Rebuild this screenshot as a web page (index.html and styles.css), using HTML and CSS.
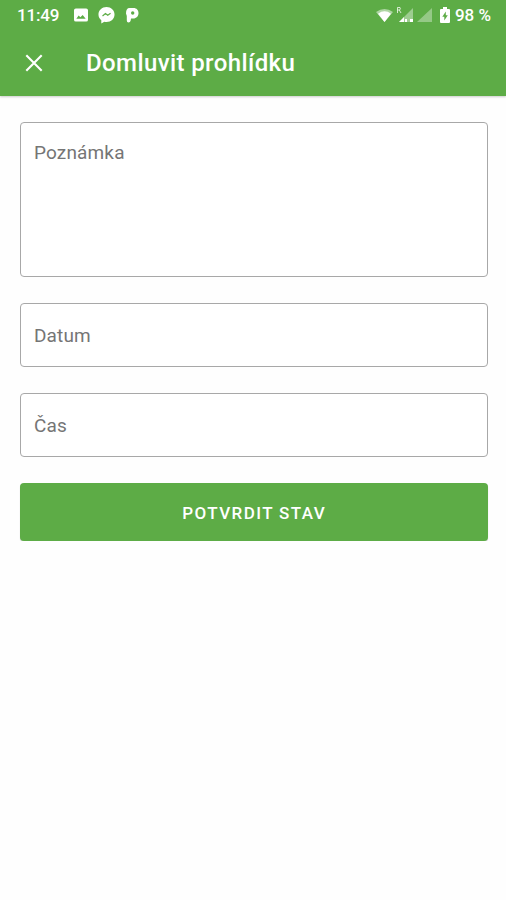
FILE: index.html
```html
<!DOCTYPE html>
<html lang="cs">
<head>
<meta charset="utf-8">
<title>Domluvit prohlídku</title>
<link rel="stylesheet" href="styles.css">
</head>
<body>
<header class="header">
  <div class="status">
    <span class="clock">11:49</span>
    <svg class="icon-image" width="14" height="14" viewBox="0 0 15 14"><path fill="#fff" fill-rule="evenodd" d="M2 0H13Q15 0 15 2V12Q15 14 13 14H2Q0 14 0 12V2Q0 0 2 0ZM2.500 11H12.500L9.300 7L6.800 9.500L5 7.600Z"/></svg>
    <svg class="icon-chat" width="17" height="17" viewBox="0 0 17 18"><path fill="#fff" d="M8.500 0C3.700 0 0 3.400 0 8C0 10.500 1.100 12.600 3 14V17.500L6.200 15.700C12 17 17 13.300 17 8C17 3.400 13.300 0 8.500 0Z"/><path d="M4.300 9.500L7.400 7L9.800 8.700L12.800 6.700" fill="none" stroke="#5dac46" stroke-width="1.300"/></svg>
    <svg class="icon-p" width="13" height="15" viewBox="0 0 13 15"><path fill="#fff" fill-rule="evenodd" d="M3.500 0H7.500C10.700 0 12.500 2.200 12.500 5C12.500 8.200 10.300 10.500 7.300 10.500H5L4.700 12.500Q4.300 14.500 2.500 14.500Q.8 14.500 .8 12.500V8L0 5.500Q0 0 3.500 0ZM6.700 3.300A1.700 1.700 0 1 0 6.700 6.700A1.700 1.700 0 1 0 6.700 3.300Z"/></svg>
    <span class="spacer"></span>
    <svg class="icon-wifi" width="17" height="13" viewBox="0 0 17 13"><path fill="#fff" fill-opacity=".5" d="M0 3Q8.500-3 17 3L8.500 13Z"/><path fill="#fff" d="M2 4.700Q8.500 0 15 4.700L8.500 13Z"/></svg>
    <svg class="icon-roaming" width="18" height="17" viewBox="0 0 18 17"><path fill="#fff" fill-opacity=".4" d="M17 2V16H3Z"/><path fill="#fff" d="M8 11V16H3ZM9 13H11V16H9ZM14 13H17V16H14Z"/><path fill="none" stroke="#fff" stroke-opacity=".75" d="M1.500 7V1.500H4Q5 3 3.500 4H1.500M3.300 4L5 7"/></svg>
    <svg class="icon-signal" width="15" height="14" viewBox="0 0 15 14"><path fill="#fff" fill-opacity=".35" d="M15 0V14H0Z"/></svg>
    <svg class="icon-battery" width="10" height="16" viewBox="0 0 10 16"><path fill="#fff" d="M3 0H7V2H9Q10 2 10 3V15Q10 16 9 16H1Q0 16 0 15V3Q0 2 1 2H3Z"/><path fill="#5dac46" d="M5.800 4.500L2.300 9.800H4.300V13.500L7.800 8.200H5.800Z"/></svg>
    <span class="percent">98 %</span>
  </div>
  <div class="toolbar">
    <svg class="close" width="18" height="18" viewBox="0 0 18 18"><path d="M1.300 1.300L16.700 16.700M16.700 1.300L1.300 16.700" stroke="#fff" stroke-width="2.100"/></svg>
    <h1 class="title">Domluvit prohlídku</h1>
  </div>
</header>
<main class="form">
  <div class="field note"><span>Poznámka</span></div>
  <div class="field"><span>Datum</span></div>
  <div class="field"><span>Čas</span></div>
  <button class="submit" type="button">POTVRDIT STAV</button>
</main>
</body>
</html>
```
FILE: styles.css
```css
* {
  box-sizing: border-box;
}

body {
  margin: 0;
  background: #fefefe;
  font-family: Roboto, sans-serif;
}

svg {
  display: block;
  flex: none;
}

.header {
  height: 96px;
  background: #5dac46;
  color: #fff;
  box-shadow: 0 1px 2px rgba(0, 0, 0, .2);
}

.status {
  display: flex;
  align-items: center;
  height: 31px;
  padding: 0 15px 0 17px;
  font-size: 17px;
  font-weight: 500;
  line-height: 31px;
  white-space: nowrap;
}

.clock {
  width: 57px;
  letter-spacing: -.2px;
}

.icon-image {
  margin: -1px 10px 0 0;
}

.icon-chat {
  margin-right: 11px;
}

.spacer {
  flex: 1;
}

.icon-wifi {
  margin-right: 3px;
}

.icon-roaming {
  margin: -3px 3px 0 0;
}

.icon-signal {
  margin: -1px 8px 0 0;
}

.icon-battery {
  margin: -1px 5px 0 0;
}

.toolbar {
  display: flex;
  align-items: center;
  height: 64px;
  padding-left: 25px;
}

.title {
  margin: 0 0 0 43px;
  font-size: 24px;
  font-weight: 500;
  line-height: 32px;
  letter-spacing: .4px;
}

.form {
  display: flex;
  flex-direction: column;
  gap: 26px;
  padding: 26px 18.500px 0 20px;
}

.field {
  display: flex;
  align-items: center;
  height: 64.300px;
  padding: 2px 13px 0;
  border: 1px solid #a8a8a8;
  border-radius: 4px;
  background: #fff;
  color: #757575;
  font-size: 19px;
  line-height: 24px;
  letter-spacing: .15px;
}

.note {
  align-items: flex-start;
  height: 154.500px;
  padding-top: 18px;
}

.submit {
  height: 57.500px;
  padding: 2px 0 0 1px;
  border: 0;
  border-radius: 4px;
  background: #5dac46;
  box-shadow: 0 1px 1px rgba(0, 0, 0, .2);
  color: #fff;
  font: 500 17px/24px Roboto, sans-serif;
  letter-spacing: 1.400px;
}
```
